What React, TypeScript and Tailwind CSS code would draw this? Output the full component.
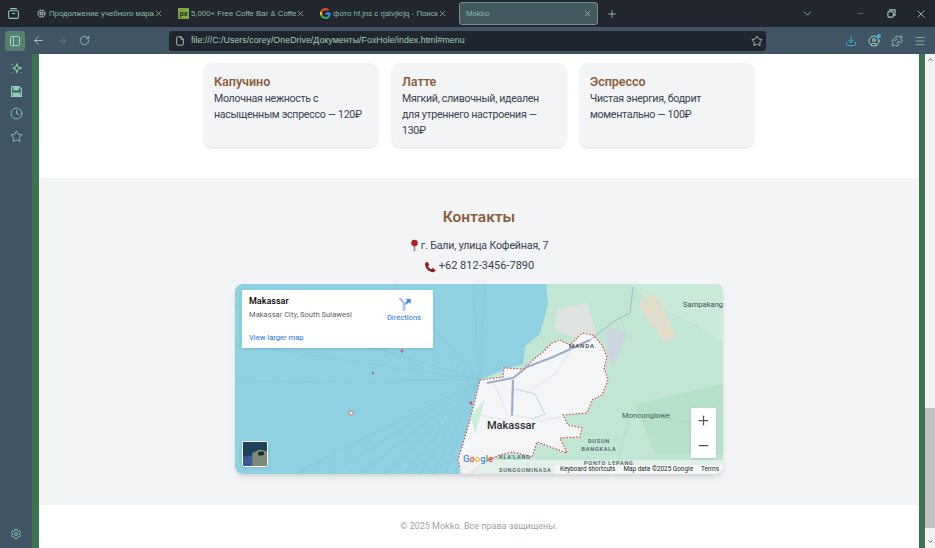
import { ArrowLeft, ArrowRight, ChevronDown, ChevronUp, CircleUser, Clock, Download, File, Menu, Minus, PanelLeft, Plus, Puzzle, RotateCw, Settings, Star, X } from "lucide-react";

const cards = [
  { title: "Капучино", text: "Молочная нежность с насыщенным эспрессо — 120₽" },
  { title: "Латте", text: "Мягкий, сливочный, идеален для утреннего настроения — 130₽" },
  { title: "Эспрессо", text: "Чистая энергия, бодрит моментально — 100₽" },
];

const cityOutline =
  "245,96 268,93 269,84 288,85 298,76 308,68 317,59 325,56 335,61 347,49 358,51 367,61 372,73 369,84 373,96 367,111 357,116 352,129 328,131 333,141 347,144 345,153 325,154 332,169 302,158 297,173 278,168 265,171 248,178 235,190 227,190 223,176 235,136";

const shipLines = [
  [0, 22], [0, 60], [0, 98], [60, 190], [95, 190], [125, 190], [150, 190], [170, 190], [185, 190], [198, 190], [210, 190],
  [222, 190], [160, 0], [238, 0], [250, 0], [130, 20],
];

const mapFont = "Roboto, sans-serif";

const GoogleG = () => (
  <svg viewBox="0 0 48 48" className="h-[11px] w-[11px]">
    <path fill="#EA4335" d="M24 9.5c3.5 0 6.700 1.300 9.100 3.500l6.800-6.800C35.800 2.400 30.300 0 24 0 14.600 0 6.500 5.400 2.600 13.200l7.900 6.200C12.400 13.600 17.700 9.500 24 9.500z" />
    <path fill="#4285F4" d="M46.500 24.500c0-1.600-.1-3.100-.4-4.500H24v9h12.700c-.6 3-2.200 5.500-4.700 7.200l7.600 5.900c4.400-4.100 6.900-10.100 6.900-17.600z" />
    <path fill="#FBBC05" d="M10.500 28.600c-.5-1.400-.8-3-.8-4.600s.3-3.200.8-4.600l-7.900-6.200C.9 16.500 0 20.100 0 24s.9 7.500 2.600 10.800l7.900-6.200z" />
    <path fill="#34A853" d="M24 48c6.500 0 11.900-2.100 15.900-5.900L32.300 36.200c-2.100 1.400-4.900 2.300-8.300 2.300-6.300 0-11.600-4.100-13.500-9.900l-7.900 6.200C6.500 42.600 14.600 48 24 48z" />
  </svg>
);

const Tab = ({ icon, title, active }: { icon?: React.ReactNode; title: string; active?: boolean }) => (
  <div
    className={`flex h-[23px] items-center overflow-hidden rounded-[3px] ${
      active ? "ml-[3px] w-[139px] border border-[#71908f] bg-[#44585f] pl-[4px] pr-[5px]" : "w-[142px] pl-[6px] pr-[11px]"
    }`}
  >
    {icon}
    <span className="ml-[2px] flex-1 whitespace-nowrap text-[7.800px] text-[#86bda6]">{title}</span>
    <X className="h-[9px] w-[9px] shrink-0 text-[#b9d8cb]" strokeWidth={1.6} />
  </div>
);

const MapView = () => (
  <div className="relative h-[190px] w-[488px] overflow-hidden rounded-lg shadow-md">
    <svg viewBox="0 0 488 190" className="block h-full w-full">
      <rect width="488" height="190" fill="#8fd0e3" />
      {shipLines.map(([x, y]) => (
        <line key={`${x}-${y}`} x1="245" y1="96" x2={x} y2={y} stroke="#7fc4da" strokeWidth="0.4" />
      ))}
      <polygon
        points="311,0 488,0 488,190 225,190 223,176 235,136 245,96 268,86 288,80 290,62 305,50 313,20"
        fill="#c1e6d3"
      />
      <polygon points="395,0 488,0 488,60 460,40 420,20" fill="#cbe9d8" />
      <polygon points="400,120 488,100 488,170 420,170" fill="#b5e0c9" />
      <polygon points="322,25 352,19 362,50 336,53 320,45" fill="#dfe3e0" />
      <polygon points="402,20 420,9 442,52 430,59" fill="#dfdcca" />
      <polygon points="372,42 392,50 378,83 372,70" fill="#ccd6e2" />
      <polygon points={cityOutline} fill="#f4f5f7" />
      <polygon points={cityOutline} fill="none" stroke="#d6423a" strokeWidth="1.2" strokeDasharray="1.4 1.8" />
      <rect x="225" y="176" width="263" height="14" fill="#eef1f0" opacity="0.75" />
      <path d="M398,3 L395,29 L378,38 L355,56" fill="none" stroke="#a9b5c8" strokeWidth="1" />
      <path d="M355,56 L318,73 L292,83 L278,94 L252,99" fill="none" stroke="#9eadcb" strokeWidth="2" />
      <path d="M278,96 L277,132" fill="none" stroke="#9eadcb" strokeWidth="2.200" />
      <path d="M260,100 L272,130 L300,135 M290,110 L320,90 L340,60 M240,130 L290,140 L330,132" fill="none" stroke="#dde1e7" strokeWidth="0.8" />
      <path d="M280,105 L300,110 L310,130 L297,135" fill="none" stroke="#9ed4de" strokeWidth="0.8" />
      <polygon points="236,132 250,115 240,150" fill="#c9efd9" />
      <path d="M470,140 L395,130 L380,190" fill="none" stroke="#a9d6bd" strokeWidth="0.6" />
      <circle cx="167" cy="67" r="1.6" fill="#c36b6b" />
      <circle cx="138" cy="89" r="1.2" fill="#b76b72" />
      <circle cx="116" cy="129" r="2.200" fill="#f0e9df" stroke="#c0544a" strokeWidth="0.7" />
      <circle cx="236" cy="119" r="1.4" fill="#d0524a" />
      <text x="334" y="64" fontFamily={mapFont} fontSize="6" letterSpacing="0.9" fontWeight="500" fill="#3a4450">MANDA</text>
      <text x="448" y="23" fontFamily={mapFont} fontSize="7.600" fill="#45505a">Sampakang</text>
      <text x="387" y="134" fontFamily={mapFont} fontSize="7.600" fill="#4b5a58">Monconglowe</text>
      <text x="252" y="145" fontFamily={mapFont} fontSize="11" fontWeight="500" fill="#2b2f33">Makassar</text>
      <text fontFamily={mapFont} fontSize="5.500" letterSpacing="0.8" fontWeight="500" fill="#4a5560">
        <tspan x="364" y="159" textAnchor="middle">DUSUN</tspan>
        <tspan x="364" y="167" textAnchor="middle">BANGKALA</tspan>
      </text>
      <text x="349" y="180.500" fontFamily={mapFont} fontSize="5.500" letterSpacing="0.8" fontWeight="500" fill="#4a5560">PONTO LEPANG</text>
      <text x="264" y="188" fontFamily={mapFont} fontSize="5.500" letterSpacing="0.8" fontWeight="500" fill="#4a5560">SUNGGUMINASA</text>
      <text x="264" y="175" fontFamily={mapFont} fontSize="5.500" letterSpacing="0.8" fontWeight="500" fill="#4a5560">ALA'LANG</text>
      <text x="228" y="178" fontFamily={mapFont} fontSize="9.500" fontWeight="500" stroke="#ffffff" strokeWidth="0.4" paintOrder="stroke">
        <tspan fill="#4285F4">G</tspan>
        <tspan fill="#EA4335">o</tspan>
        <tspan fill="#FBBC05">o</tspan>
        <tspan fill="#4285F4">g</tspan>
        <tspan fill="#34A853">l</tspan>
        <tspan fill="#EA4335">e</tspan>
      </text>
    </svg>

    <div className="absolute left-[7px] top-[6px] flex h-[58px] w-[191px] justify-between bg-white pl-[7px] pr-[12px] pt-[5px] font-['Roboto',sans-serif] shadow">
      <div>
        <div className="text-[9px] font-medium leading-[12px] text-black">Makassar</div>
        <div className="mt-[2px] text-[7.600px] leading-[12px] text-[#5f6368]">Makassar City, South Sulawesi</div>
        <div className="mt-[11px] text-[7.600px] leading-[12px] text-[#1a73e8]">View larger map</div>
      </div>
      <div className="flex flex-col items-center pt-[1px]">
        <svg viewBox="0 0 24 24" className="h-[16px] w-[16px]">
          <path d="M3 3 L10 11 V22 H14 V10 L8 3 Z" fill="#a9c3f3" />
          <path d="M14 14 V10 L17 7 L14.500 4.500 H22 V12 L19.500 9.500 Z" fill="#4285f4" />
        </svg>
        <span className="text-[7.600px] leading-[12px] text-[#1a73e8]">Directions</span>
      </div>
    </div>

    <div className="absolute bottom-[7px] left-[7px] h-[26px] w-[26px] overflow-hidden rounded-[2px] border border-white bg-[#1f4358] shadow">
      <svg viewBox="0 0 26 26" className="h-full w-full">
        <rect width="26" height="26" fill="#1e4258" />
        <polygon points="0,16 10,15 10,26 0,26" fill="#3c5a92" />
        <polygon points="10,12 18,8 26,10 26,26 10,26" fill="#7d8a76" />
        <polygon points="16,11 22,10 23,14 17,15" fill="#1d2a2b" />
      </svg>
    </div>

    <div className="absolute bottom-[16px] right-[7px] flex h-[50px] w-[25px] flex-col items-center bg-white shadow">
      <div className="flex h-[25px] items-center justify-center"><Plus className="h-[15px] w-[15px] text-[#555]" strokeWidth={2} /></div>
      <div className="flex h-[25px] items-center justify-center"><Minus className="h-[15px] w-[15px] text-[#555]" strokeWidth={2} /></div>
    </div>

    <div className="absolute bottom-0 right-0 flex h-[9px] items-center gap-[8px] bg-white/60 pl-[5px] pr-[4px] font-['Roboto',sans-serif] text-[6.400px] leading-none text-[#1f1f1f]">
      <span>Keyboard shortcuts</span>
      <span>Map data ©2025 Google</span>
      <span>Terms</span>
    </div>
  </div>
);

export default function App() {
  return (
    <div className="flex h-[548px] w-[935px] flex-col overflow-hidden bg-[#22272f] font-['Roboto',sans-serif]">
      <div className="flex h-[27px] shrink-0 items-center pl-[7px] pr-[8px] font-['Liberation_Sans',sans-serif]">
        <svg viewBox="0 0 24 24" className="h-[13px] w-[13px] text-[#8fcbb2]" fill="none" stroke="currentColor" strokeWidth="2">
          <rect x="3" y="7" width="18" height="14" rx="2" />
          <path d="M6 3h12M9 12h6" />
        </svg>
        <div className="ml-[10px] flex items-center">
          <Tab
            title="Продолжение учебного мара"
            icon={
              <svg viewBox="0 0 16 16" className="h-[11px] w-[11px] shrink-0" fill="none" stroke="#9fb0ad" strokeWidth="2">
                <circle cx="8" cy="8" r="5" strokeDasharray="3 1" />
                <circle cx="8" cy="8" r="2" />
              </svg>
            }
          />
          <Tab
            title="5,000+ Free Coffe Bar & Coffe"
            icon={<span className="flex h-[11px] w-[11px] shrink-0 items-center justify-center bg-[#7fa93f] text-[7px] font-bold leading-none text-[#22272f]">px</span>}
          />
          <Tab title="фото hf,jns с rjatvjkrjq - Поиск" icon={<span className="shrink-0"><GoogleG /></span>} />
        </div>
        <Tab active title="Mokko" />
        <Plus className="ml-[8px] h-[12px] w-[12px] text-[#9fd0bb]" strokeWidth={1.6} />
        <div className="ml-auto flex items-center">
          <ChevronDown className="h-[13px] w-[13px] text-[#9fd0bb]" strokeWidth={1.5} />
          <Minus className="ml-[42px] h-[9px] w-[9px] text-[#6f8f84]" strokeWidth={1.6} />
          <svg viewBox="0 0 10 10" className="ml-[22px] h-[9px] w-[9px]" fill="none" stroke="#9fd0bb" strokeWidth="1.2">
            <rect x="1" y="3" width="6" height="6" rx="1" />
            <path d="M3 2.500V1h6v6H7.500" />
          </svg>
          <X className="ml-[19px] h-[12px] w-[12px] text-[#b9d8cb]" strokeWidth={1.5} />
        </div>
      </div>

      <div className="flex h-[27px] shrink-0 items-center bg-[#405463] pl-[5px] pr-[9px]">
        <div className="flex h-[20px] w-[20px] items-center justify-center rounded-[3px] bg-[#56806f]">
          <PanelLeft className="h-[12px] w-[12px] text-[#a9e0c6]" strokeWidth={1.8} />
        </div>
        <ArrowLeft className="ml-[7px] h-[13px] w-[13px] text-[#a9d5c2]" strokeWidth={1.6} />
        <ArrowRight className="ml-[11px] h-[12px] w-[12px] text-[#65827f]" strokeWidth={1.6} />
        <RotateCw className="ml-[11px] h-[11px] w-[11px] text-[#a9d5c2]" strokeWidth={1.6} />
        <div className="ml-[79px] flex h-[20px] w-[597px] items-center rounded-[3px] bg-[#20262f] pl-[6px] pr-[3px]">
          <File className="h-[10px] w-[10px] text-[#cfe3da]" strokeWidth={1.8} />
          <span className="ml-[6px] flex-1 whitespace-nowrap font-['Liberation_Sans',sans-serif] text-[8.900px] text-[#9fd0bb]">file:///C:/Users/corey/OneDrive/Документы/FoxHole/index.html#menu</span>
          <Star className="h-[12px] w-[12px] text-[#cfe3da]" strokeWidth={1.5} />
        </div>
        <Download className="ml-auto h-[12px] w-[12px] text-[#30b6d8]" strokeWidth={2} />
        <div className="relative ml-[11px] h-[12px] w-[12px]">
          <CircleUser className="h-[12px] w-[12px] text-[#a9e0c6]" strokeWidth={1.8} />
          <span className="absolute -right-[1px] -top-[1px] h-[4px] w-[4px] rounded-full bg-[#30b6d8]" />
        </div>
        <Puzzle className="ml-[11px] h-[12px] w-[12px] text-[#a9d5c2]" strokeWidth={1.6} />
        <Menu className="ml-[11px] h-[12px] w-[12px] text-[#8fc7ae]" strokeWidth={1.6} />
      </div>

      <div className="flex min-h-0 flex-1">
        <div className="flex w-[32px] shrink-0 flex-col items-center bg-[#405463] py-[8px] text-[#8fd3b6]">
          <svg viewBox="0 0 16 16" className="h-[13px] w-[13px]" fill="none" stroke="currentColor" strokeWidth="1.3">
            <path d="M8.500 2.500 L10 6 L14 7.500 L10 9 L8.500 13 L7 9 L4 7.500 L7 6 Z" />
            <path d="M2 3h1.500M2 13h1M13 13h1" />
          </svg>
          <svg viewBox="0 0 16 16" className="mt-[9.500px] h-[13px] w-[13px]" fill="none" stroke="currentColor" strokeWidth="1.500">
            <path d="M2 2h9l3 3v9H2z" />
            <path d="M5 2v4h5V2M4 14v-4h8v4" fill="currentColor" />
          </svg>
          <Clock className="mt-[9.500px] h-[13px] w-[13px]" strokeWidth={1.6} />
          <Star className="mt-[9.500px] h-[13px] w-[13px]" strokeWidth={1.6} />
          <Settings className="mt-auto h-[12px] w-[12px]" strokeWidth={1.6} />
        </div>

        <div className="w-[7px] shrink-0 bg-[#3e734f]" />

        <div className="flex w-[880px] shrink-0 flex-col overflow-hidden bg-white">
          <div className="flex h-[124px] shrink-0 justify-center gap-[14px] pt-[9px]">
            {cards.map(card => (
              <div key={card.title} className="h-[84px] w-[174px] rounded-lg bg-[#f3f4f6] px-[10px] pt-[10px] shadow-sm">
                <h3 className="text-[12.500px] font-semibold leading-[18px] text-[#8b5e3c]">{card.title}</h3>
                <p className="text-[10.600px] leading-[16px] tracking-[-0.3px] text-[#374151]">{card.text}</p>
              </div>
            ))}
          </div>

          <section className="flex h-[327px] shrink-0 flex-col items-center bg-[#f3f4f6] pt-[28px]">
            <h2 className="text-[15.500px] font-semibold leading-[22px] text-[#8b5e3c]">Контакты</h2>
            <div className="mt-[7px] flex h-[21px] items-center text-[10.600px] tracking-[-0.15px] text-[#374151]">
              <svg viewBox="0 0 10 16" className="mr-[2px] h-[13px] w-[9px]">
                <rect x="4" y="6" width="2" height="9" fill="#8a9094" />
                <circle cx="5" cy="5" r="4" fill="#b01e22" />
              </svg>
              г. Бали, улица Кофейная, 7
            </div>
            <div className="mb-[7px] flex h-[21px] items-center text-[11px] text-[#374151]">
              <svg viewBox="0 0 24 24" className="mr-[3px] h-[12px] w-[12px]">
                <path fill="#8f1d1d" d="M6.600 1.500 L10.500 7.500 L8 10.500 C9.500 13.500 11 15 14 16.500 L17 14 L23 18 C22 21 19.500 23 17 22.500 C9 21 3.500 15 2 7.500 C1.500 5 3.500 2.500 6.600 1.500 Z" />
              </svg>
              +62 812-3456-7890
            </div>
            <MapView />
          </section>

          <footer className="flex flex-1 items-center justify-center bg-white pt-[1px] text-[9px] text-[#9ca3af]">
            © 2025 Mokko. Все права защищены.
          </footer>
        </div>

        <div className="w-[6px] shrink-0 bg-[#3e734f]" />

        <div className="flex w-[10px] shrink-0 flex-col items-center bg-[#f1f1f1] pb-[3px] pt-[2px]">
          <ChevronUp className="h-[7px] w-[7px] text-[#555]" strokeWidth={3} />
          <div className="flex w-full flex-1 flex-col justify-end pb-[10px]">
            <div className="h-[120px] bg-[#c1c1c1]" />
          </div>
          <ChevronDown className="h-[7px] w-[7px] text-[#555]" strokeWidth={3} />
        </div>
      </div>
    </div>
  );
}
